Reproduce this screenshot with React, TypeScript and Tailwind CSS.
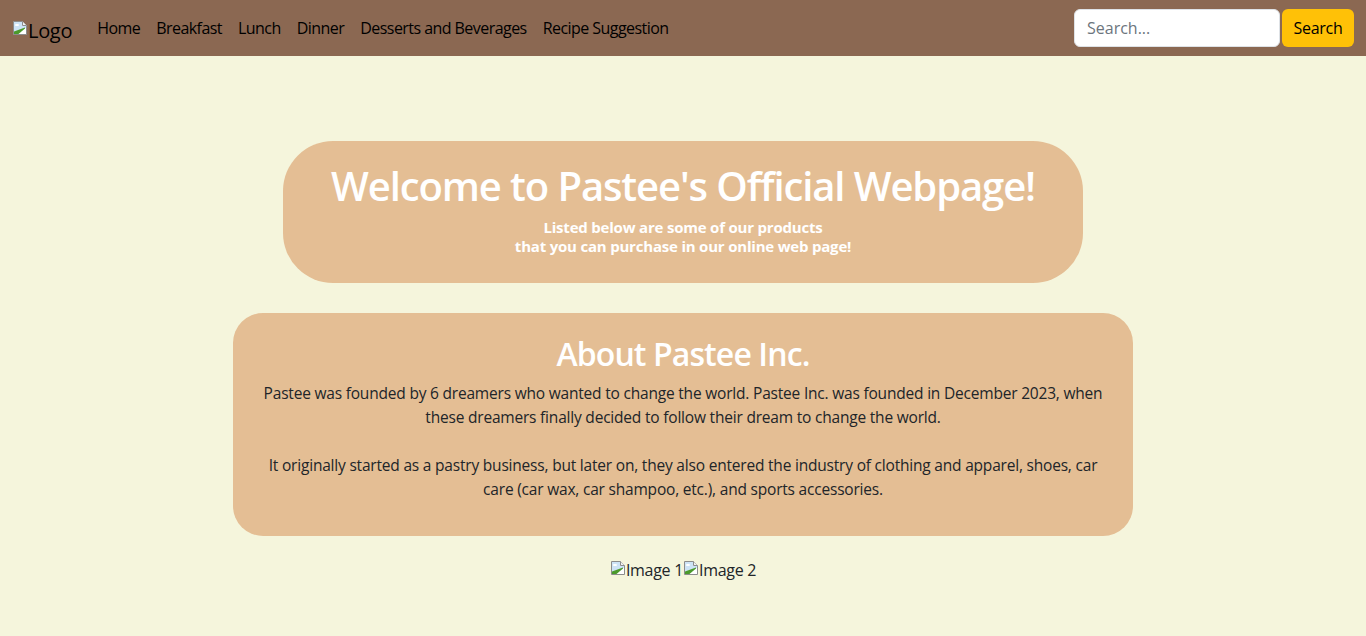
import React from "react";

function BrokenImg() {
  return (
    <svg width="16" height="16" viewBox="0 0 16 16" className="inline-block shrink-0">
      <path d="M1.5 1.5 H10.5 L14.5 5.5 V14.5 H1.5 Z" fill="#ffffff" stroke="#8c8c8c" />
      <path d="M10.5 1.5 V5.5 H14.5" fill="#f2f2f2" stroke="#8c8c8c" />
      <path d="M2 2 H10 V6 H14 V8 L2 12 Z" fill="#cde3f6" />
      <ellipse cx="5" cy="5" rx="2.2" ry="1.1" fill="#ffffff" />
      <path d="M2 14 V11.5 L13 7.5 V8.5 L6.5 14 Z" fill="#4b9a2b" />
    </svg>
  );
}

const font = { fontFamily: '"Open Sans", "Noto Sans", sans-serif' };

export default function App() {
  const links = ["Home", "Breakfast", "Lunch", "Dinner", "Desserts and Beverages", "Recipe Suggestion"];
  return (
    <div className="min-h-[636px] bg-[#f5f5dc] text-[#212529] font-['Open_Sans',sans-serif]">
      <nav className="h-14 bg-[#8b6852] flex items-center justify-between px-3">
        <div className="flex items-center">
          <span className="flex items-start mr-4 text-[20px] leading-[30px] text-black">
            <span className="mt-[1px]"><BrokenImg /></span>
            <span className="mt-[6px] tracking-[-0.3px]">Logo</span>
          </span>
          <ul className="flex items-center ml-[1px]">
            {links.map((l) => (
              <li key={l}>
                <a className="block px-2 py-2 text-[16px] leading-6 text-black tracking-[-0.55px]">{l}</a>
              </li>
            ))}
          </ul>
        </div>
        <form className="flex items-center gap-[2px] -mt-[1px]" onSubmit={(e) => e.preventDefault()}>
          <input
            className="w-[206px] h-[38px] bg-white border border-[#dee2e6] rounded-[6px] px-3 text-[16px] placeholder:text-[#6c757d] outline-none"
            placeholder="Search..."
          />
          <button className="w-[72px] h-[38px] bg-[#ffc107] rounded-[6px] text-[16px] text-black tracking-[-0.3px]">
            Search
          </button>
        </form>
      </nav>

      <main className="flex flex-col items-center pt-[85px]">
        <section className="w-[800px] h-[142px] bg-[#e4be94] rounded-[50px] text-center text-white pt-[21px]">
          <h1 className="text-[40px] leading-[48px] font-semibold mb-2 tracking-[-1.1px]">
            Welcome to Pastee's Official Webpage!
          </h1>
          <p className="text-[15px] leading-[19px] font-bold tracking-[-0.2px]">
            Listed below are some of our products
            <br />
            that you can purchase in our online web page!
          </p>
        </section>

        <section className="w-[900px] mt-[30px] bg-[#e4be94] rounded-[30px] text-center pt-[22px] pb-[19px] px-[20px]">
          <h2 className="text-[32px] leading-[38px] font-semibold text-white mb-2 tracking-[-0.9px]">About Pastee Inc.</h2>
          <p className="text-[15.5px] leading-6 mb-4 text-[#212529] tracking-[-0.2px]">
            Pastee was founded by 6 dreamers who wanted to change the world. Pastee Inc. was founded in December 2023, when
            <br />
            these dreamers finally decided to follow their dream to change the world.
            <br />
            <br />
            It originally started as a pastry business, but later on, they also entered the industry of clothing and apparel, shoes, car
            <br />
            care (car wax, car shampoo, etc.), and sports accessories.
          </p>
        </section>

        <div className="mt-6 flex items-start text-[16px] leading-5" style={font}>
          <span className="flex items-start">
            <BrokenImg />
            <span className="tracking-[-0.3px]">Image 1</span>
          </span>
          <span className="flex items-start">
            <BrokenImg />
            <span className="tracking-[-0.3px]">Image 2</span>
          </span>
        </div>
      </main>
    </div>
  );
}
